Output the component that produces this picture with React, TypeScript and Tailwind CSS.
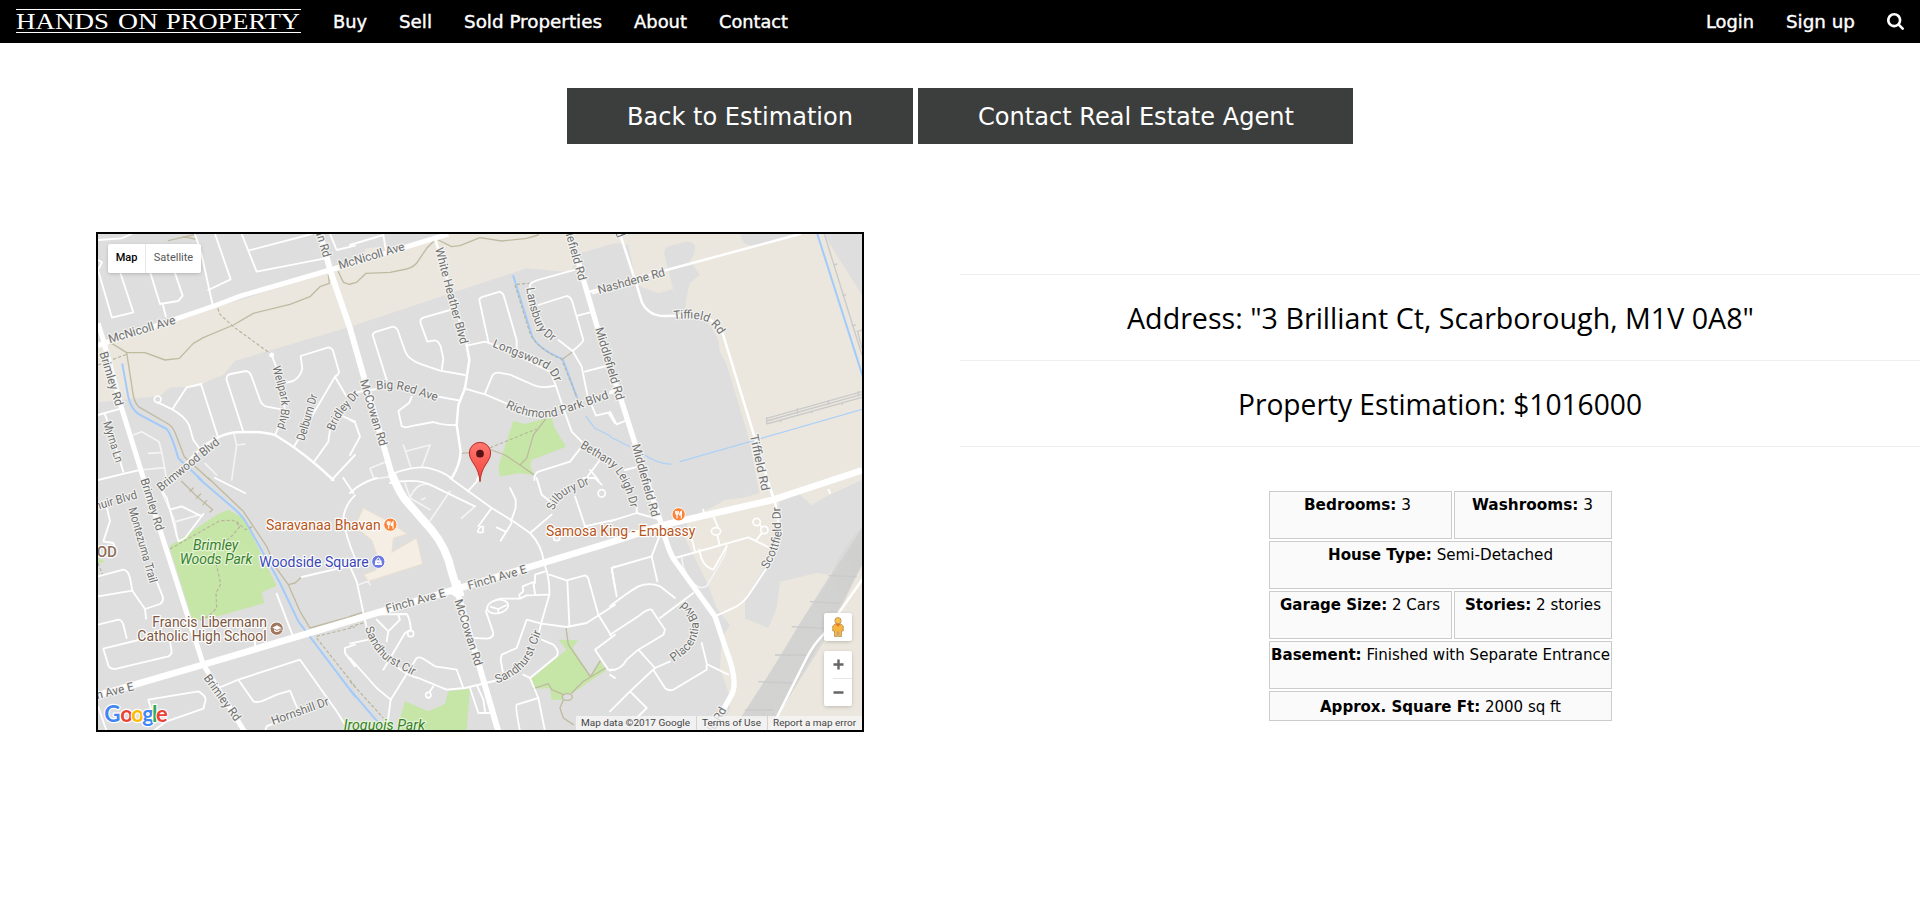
import React from "react";

type Tile = { x: number; y: number; d: string[] };

// Map geometry is drawn in a 2292 x 1488 space, split in six sheets.
const A = { x: 0, y: 0 };
const B = { x: 780, y: 0 };
const C = { x: 1560, y: 0 };
const D = { x: 0, y: 759 };
const E = { x: 780, y: 759 };
const F = { x: 1560, y: 759 };

const minorRoads: Tile[] = [
  {
    ...A,
    d: [
      "M24 105 L36 112 L24 135 L66 278 L130 262 L80 110 M180 140 L210 237 L265 228 L278 212 L240 100",
      "M315 27 L335 90 L368 240 M375 27 L422 163 L355 195 M24 45 L95 40 L125 27 M455 27 L500 140 L705 100 M475 77 L665 27 M720 27 L740 75 L795 62",
      "M228 275 L218 237 M545 390 L575 470 L585 560 L555 630 M580 475 L610 468 Q632 455 637 430 L632 393 L715 367 Q727 369 730 380 L747 440 Q747 448 735 455 L612 665",
      "M735 455 L770 515 M460 620 L410 465 Q408 450 422 447 L468 438 Q480 440 485 455 L510 525 Q515 540 530 545 L575 553",
      "M385 640 L333 477 L290 487 L247 553 M205 533 L247 553 Q285 575 297 600 L310 645 L330 672",
      "M795 690 L725 765 M670 713 L715 650 L722 600 M750 570 L795 590",
      "M24 570 L60 560 L95 550 M45 568 L60 610 L100 740 M24 765 L105 745 L150 735",
    ],
  },
  {
    ...B,
    d: [
      "M110 465 L68 330 Q70 322 80 320 L128 305 Q140 307 144 318 L165 378 Q175 405 215 418 L270 437 L345 450",
      "M300 255 L220 278 Q208 282 212 295 L232 350 L255 346 Q265 346 272 365 L280 400 L275 435",
      "M350 362 L405 350 L440 362 L600 440 L615 475 L640 550 L665 620 L700 655 L795 720",
      "M415 350 L388 225 Q388 218 400 215 L450 200 L460 208 L500 345 L500 378 M342 490 L405 508 L480 540",
      "M405 505 L428 450 Q434 442 445 443 L480 449 L550 480 Q575 492 615 482",
      "M185 515 L178 533 L145 558 L155 603 Q165 610 180 604 L250 591 Q280 602 320 600 M110 465 L80 492 L0 505 M255 513 L330 527",
      "M540 200 L540 178 Q550 168 570 163 L690 130 M565 240 L650 213 Q662 215 667 230 L700 345 Q700 352 668 378 L625 345",
      "M668 378 L695 425 L712 510 L738 572 L775 563 L795 595 M683 272 L720 262 M705 440 L780 420 M728 205 L765 195 M780 500 L795 495",
      "M695 665 L660 710 L565 740 Q553 745 553 765 M750 705 L705 765 M720 735 L745 765",
      "M130 745 Q200 720 240 730 Q280 740 305 760 M0 585 L15 592 L30 635 L0 690 M0 60 L100 30 L107 72",
      "M385 755 L380 765",
    ],
  },
  { ...C, d: ["M0 560 L20 598 L45 588 M0 505 L25 498 M45 735 L85 725"] },
  {
    ...D,
    d: [
      "M50 85 L60 130 L40 190 L70 195 L80 220 M24 295 L100 275 Q115 278 120 300 L127 338 L165 393 L168 422",
      "M165 393 L210 378 Q222 370 218 355 L200 310 M24 355 L127 338 M24 440 L85 425 Q95 425 100 440 L110 480 M40 512 L170 480 M40 512 L55 562 Q60 575 80 572 L235 535 Q245 530 245 520 L238 480",
      "M205 20 L230 60 L240 95 L265 190 L285 180 L340 108 M240 95 L275 85 L335 115 M375 0 L465 45",
      "M385 630 L445 605 L630 545 L740 700 L765 740 M445 605 L490 670 Q500 675 520 668 L560 650 L600 638 L628 705",
      "M175 665 L325 640 Q345 650 347 665 L340 692 L230 730 L190 759 M175 665 L185 700 M525 759 L530 745 L600 715",
      "M560 347 L607 470 M495 480 L495 505 M635 297 L795 260 M760 0 L790 45 M795 52 Q765 80 760 120 Q765 170 795 240",
      "M795 500 L765 510 L765 525 L795 565 M24 685 L50 759",
    ],
  },
  {
    ...E,
    d: [
      "M0 45 Q30 15 80 0 M120 15 Q200 0 240 20 L375 85 M300 0 L425 90 L490 130 L540 165 Q575 200 582 255 Q600 300 598 350 L578 420 L565 470",
      "M390 0 L353 40 M480 30 L497 65 L497 90 L483 130 M425 90 L385 145 M385 160 L400 150 M485 135 L452 188 M440 148 L465 160",
      "M560 0 L575 50 L600 70 M540 165 L605 110 M675 55 L705 145 L795 125 M700 0 L735 0 L755 20",
      "M0 265 L20 310 L50 450 L75 500 Q150 590 205 600 L290 635 L345 630 L470 600 M0 497 L55 485 M0 540 L80 630 L122 665",
      "M122 665 L110 755 M122 665 L200 540 Q210 535 220 542 L255 565 L320 575 L340 630 M235 660 L240 640 L250 625",
      "M55 410 L170 408 Q178 415 183 455 L165 465 L100 575 M90 435 L115 460 L110 490 M115 460 L150 425 L145 412 M80 425 L90 435",
      "M375 480 L410 482 Q430 480 430 465 L408 400 Q415 370 450 362 L510 362 L530 352 L598 350 M510 362 L508 350 L520 340 L518 325 L550 312 L555 348 M555 315 L555 290 L585 280",
      "M598 290 L650 307 L705 292 Q715 295 717 310 L745 410 L785 475 M652 307 L658 440 M795 380 L710 435 L650 447 L575 437 L530 425 L500 510 L455 530 L452 545 L460 590",
      "M520 590 L540 600 L565 660 L585 759 M565 660 L500 680 Q495 685 510 759 M540 600 L620 535 Q630 520 610 500 L575 485",
      "M795 470 L735 515 L775 575 L795 575 M795 600 L780 590 M360 630 L385 705 L420 705 M382 625 L400 665 L405 700",
      "M785 270 L795 330 M795 265 L785 270",
    ],
  },
  {
    ...F,
    d: [
      "M0 130 L80 105 L150 125 M80 85 L80 105 M280 95 L283 115 M655 35 L660 45 M125 235 L150 170",
      "M20 355 L5 270 L125 235 L142 310 M0 385 Q50 345 85 325 Q120 312 150 325 L195 360 M250 345 L150 420",
      "M0 470 L85 415 Q115 390 125 395 L165 455 L160 470 L85 515 L135 570 L180 550 M0 578 Q35 575 50 545 L85 515",
      "M135 570 L60 640 L0 700 M60 640 L110 690 L60 740 M130 575 L165 630 Q175 640 190 635 L290 575 L290 555 L275 495 M290 558 L355 590",
      "M195 240 L415 178 L480 210 M245 180 L255 220 M268 215 Q275 265 310 275 L350 205 M310 115 L325 150 M322 170 L328 198 M440 185 L460 160",
      "M315 415 L380 385 Q405 370 420 345 L470 270",
    ],
  },
];

const faintRoads: Tile[] = [
  {
    ...A,
    d: ["M130 630 L155 620 L207 650 L215 680 L230 765 M175 685 L212 683 M150 735 L225 728", "M432 628 L440 660 L425 765 M440 660 L465 657 M345 715 L380 750"],
  },
  { ...B, d: ["M160 660 L182 725 M170 678 L240 660 L215 728 M60 730 L108 710 L122 760 M60 730 L72 762 L120 755"] },
  {
    ...E,
    d: ["M165 15 L180 60 L240 95 M180 60 Q200 10 240 20 M300 40 L240 128 M375 85 L335 120 M215 65 L225 60", "M25 320 L55 310 L60 320"],
  },
  { ...F, d: ["M350 200 L345 230 L290 325 Q270 335 255 320 Q220 290 215 240"] },
  { ...D, d: ["M205 20 L255 130 L260 175 M260 130 L330 110"] },
];

const collectors: Tile[] = [
  { ...A, d: ["M330 672 Q390 625 440 622 Q510 618 555 630 Q640 680 730 765", "M240 765 L330 672"] },
  { ...B, d: ["M255 40 L350 360 L358 405 L345 490 L325 540 L320 600 L332 680 Q330 720 305 760"] },
  { ...C, d: ["M30 27 L80 180 L95 230 Q115 273 165 273 L270 270 Q310 280 338 325 L435 640 L490 820", "M-60 200 L170 135 L570 27"] },
  { ...F, d: ["M480 30 L495 70 L508 150 Q505 220 470 270", "M760 300 L640 470 Q610 500 590 540 L480 759"] },
];

const trails: Tile[] = [
  {
    ...A,
    d: [
      "M40 360 L65 355 L110 383 L165 383 L225 405 L268 400 L310 355 L340 338 L430 300 L490 265 L600 238 L660 215 L690 185 L718 175 L715 150 M745 140 L760 172 L780 179",
      "M110 383 L128 500 Q132 530 145 545 L235 597 Q250 605 260 635 L283 695 L360 765 M235 47 L320 27 M280 35 L315 42",
    ],
  },
  {
    ...B,
    d: [
      "M0 177 L20 172 L48 145 L120 142 L170 132 Q195 125 203 110 L230 70 L255 45 M265 45 L305 65 L330 62 L390 38 L455 48 L530 40 L565 30",
      "M425 675 L465 690 L510 720 L550 748 M510 720 L530 700 L550 630 L590 578 M332 685 L360 683 M638 402 L668 380",
    ],
  },
  {
    ...D,
    d: [
      "M355 0 L460 100 L490 145 L530 205 L555 265 L595 320 L630 400 L660 450 L795 412 M595 320 L615 315 L635 297",
      "M275 10 L320 55 L368 95 L360 102 M300 40 L310 30 M320 60 L332 48 M340 80 L350 68",
    ],
  },
  {
    ...E,
    d: ["M0 415 L42 402 M648 450 L655 500 L722 597 L767 570 M722 597 L700 610 L665 645 M722 595 L750 550 M550 632 L595 617 L605 635 L640 650 M640 665 L630 690 L640 720 L670 740"],
  },
];

const dashedTrails: Tile[] = [
  { ...A, d: ["M383 250 L390 268 L430 305 L540 385", "M24 420 L110 388"] },
  { ...B, d: ["M420 668 L560 612", "M500 178 L540 175", "M495 180 L540 325 Q560 370 635 403 L690 540"] },
  { ...D, d: ["M240 213 L390 128 L430 127 L450 145 L420 180 L385 200", "M440 130 L465 155 L490 145", "M375 240 L392 318 L378 345 L380 390 L355 415 L325 428", "M680 480 L795 625", "M680 475 L795 447", "M24 255 L38 290"] },
  { ...E, d: ["M0 610 L100 720", "M0 447 L45 433"] },
];

const water: Tile[] = [
  { ...A, d: ["M97 418 L112 500 Q120 560 160 575 L230 612 Q245 630 265 700 L335 765"] },
  { ...B, d: ["M490 153 L545 330 Q560 370 638 402 L680 515"] },
  { ...C, d: ["M622 27 L760 460"] },
  { ...D, d: ["M325 0 L430 90 Q460 115 475 145 L570 315 L625 430 L795 655"] },
  { ...E, d: ["M0 635 L90 740"] },
];

const thinWater: Tile[] = [
  { ...B, d: ["M690 525 L700 550 M708 575 L735 610 L780 632"] },
  { ...C, d: ["M0 635 L60 665 M100 688 Q150 720 185 717 M210 710 L760 552"] },
];

function Lines({ tiles, stroke, width, dash }: { tiles: Tile[]; stroke: string; width: number; dash?: string }) {
  return (
    <g fill="none" stroke={stroke} strokeWidth={width} strokeLinejoin="round" strokeLinecap={dash ? "butt" : "round"} strokeDasharray={dash}>
      {tiles.map((t, i) => (
        <g key={i} transform={`translate(${t.x} ${t.y})`}>
          {t.d.map((d, j) => (
            <path key={j} d={d} />
          ))}
        </g>
      ))}
    </g>
  );
}

type Straight = [string, number, number, number, number];

// text, start of baseline, end of baseline
const roadLabels: Straight[] = [
  ["McNicoll Ave", 62, 356, 262, 296],
  ["McNicoll Ave", 752, 134, 949, 76],
  ["Brimley Rd", 31, 385, 80, 546],
  ["Myrna Ln", 42, 594, 80, 716],
  ["Delburn Dr", 646, 650, 686, 512],
  ["Brimwood Blvd", 216, 801, 394, 656],
  ["McCowan Rd", 812, 468, 872, 666],
  ["White Heather Blvd", 1038, 72, 1114, 360],
  ["Middlefield Rd", 1518, 312, 1583, 528],
  ["Nashdene Rd", 1530, 208, 1730, 153],
  ["Tiffield Rd", 1982, 632, 2018, 800],
  ["Middlefield Rd", 1628, 662, 1688, 878],
  ["Brimley Rd", 154, 765, 202, 920],
  ["Montezuma Trail", 118, 852, 182, 1076],
  ["Brimley Rd", 343, 1360, 438, 1492],
  ["Hornshill Dr", 552, 1501, 722, 1440],
  ["McCowan Rd", 1096, 1128, 1158, 1326],
];

function RoadLabels() {
  return (
    <>
      {roadLabels.map(([t, x1, y1, x2, y2], i) => {
        const len = Math.hypot(x2 - x1, y2 - y1);
        const angle = (Math.atan2(y2 - y1, x2 - x1) * 180) / Math.PI;
        return (
          <text key={i} transform={`translate(${x1} ${y1}) rotate(${angle})`} textLength={len} lengthAdjust="spacingAndGlyphs">
            {t}
          </text>
        );
      })}
    </>
  );
}

type Curve = { id: string; text: string; d: string; len: number };

const curvedLabels: Curve[] = [
  { id: "muir", text: "muir Blvd", d: "M10 860 L152 819", len: 142 },
  { id: "wellpark", text: "Wellpark Blvd", d: "M550 428 L575 520 Q582 560 562 612", len: 186 },
  { id: "bridley", text: "Bridley Dr", d: "M735 620 Q752 575 775 552 L812 510", len: 136 },
  { id: "bigred", text: "Big Red Ave", d: "M862 495 Q920 488 960 503 L1044 530", len: 186 },
  { id: "longsword", text: "Longsword Dr", d: "M1209 366 Q1300 402 1350 422 Q1388 436 1400 480", len: 224 },
  { id: "bethany", text: "Bethany Leigh Dr", d: "M1472 668 L1562 722 Q1608 765 1625 852", len: 250 },
  { id: "lansbury", text: "Lansbury Dr", d: "M1312 190 Q1322 270 1352 320 Q1370 340 1408 362", len: 186 },
  { id: "richmond", text: "Richmond Park Blvd", d: "M1249 548 Q1330 590 1400 574 Q1480 550 1580 513", len: 326 },
  { id: "tiffieldTop", text: "Tiffield Rd", d: "M1754 284 Q1820 278 1850 290 Q1880 305 1900 350", len: 155 },
  { id: "silbury", text: "Silbury Dr", d: "M1396 858 Q1400 830 1440 805 L1510 775", len: 138 },
  { id: "scottfield", text: "Scottfield Dr", d: "M2036 1035 Q2068 980 2077 930 L2074 840", len: 196 },
  { id: "placentia", text: "Placentia Blvd", d: "M1754 1312 L1798 1278 Q1832 1240 1828 1190 Q1818 1145 1752 1104", len: 226 },
  { id: "sandhurstW", text: "Sandhurst Cir", d: "M828 1210 Q850 1280 900 1315 L980 1356", len: 212 },
  { id: "sandhurstE", text: "Sandhurst Cir", d: "M1223 1376 Q1300 1350 1330 1290 L1360 1214", len: 214 },
  { id: "finchW", text: "Finch Ave E", d: "M894 1165 L1072 1115", len: 185 },
  { id: "finchE", text: "Finch Ave E", d: "M1140 1095 L1316 1044", len: 183 },
  { id: "finchFar", text: "Finch Ave E", d: "M-40 1440 L138 1396", len: 182 },
  { id: "middlefieldTop", text: "Middlefield Rd", d: "M1408 -48 L1472 178", len: 226 },
  { id: "mccowanTop", text: "McCowan Rd", d: "M646 -90 L704 104", len: 198 },
  { id: "tiffieldFar", text: "Rd", d: "M1572 5 L1588 50", len: 38 },
  { id: "fieldSouth", text: "Middlefield Rd", d: "M1802 1650 L1916 1452", len: 224 },
];

function Curves() {
  return (
    <>
      {curvedLabels.map((c) => (
        <g key={c.id}>
          <path id={c.id} d={c.d} fill="none" stroke="none" />
          <text textLength={c.len} lengthAdjust="spacingAndGlyphs">
            <textPath href={`#${c.id}`} textLength={c.len} lengthAdjust="spacingAndGlyphs">
              {c.text}
            </textPath>
          </text>
        </g>
      ))}
    </>
  );
}

function Poi({ text, x, y, w, fill }: { text: string; x: number; y: number; w: number; fill: string }) {
  return (
    <text x={x} y={y} textLength={w} lengthAdjust="spacingAndGlyphs" fill={fill}>
      {text}
    </text>
  );
}

function Fork({ x, y }: { x: number; y: number }) {
  return (
    <g transform={`translate(${x} ${y})`}>
      <circle r="20" fill="#fb8438" stroke="#fff" strokeWidth="3" />
      <g stroke="#fff" fill="none" strokeWidth="3.500" strokeLinecap="round">
        <path d="M-9 -9 V-3 Q-9 0 -5 1 Q-1 0 -1 -3 V-9 M-5 -9 V11" />
        <path d="M8 11 V-9 Q3 -6 3 2 H8" fill="#fff" />
      </g>
    </g>
  );
}

function MapCanvas() {
  const rails = Array.from({ length: 22 }, (_, i) => i);
  return (
    <svg className="block h-full w-full" viewBox="24 27 2292 1488">
      <rect x="24" y="27" width="2292" height="1488" fill="#dedede" />
      <g fill="#ebe7de">
        <path d="M24 350 L370 250 L720 140 L1040 40 L1080 27 L2316 27 V1515 H1890 L1920 1450 L1915 1400 L1890 1330 L1895 1240 L1920 1200 L1880 1150 L1855 1080 L1830 1030 L1805 980 L1785 940 L1795 880 L1870 845 L1905 824 L1960 818 L2008 805 L2000 765 L1980 650 L1910 420 L1890 380 L1885 345 L1860 300 L1785 250 L1798 175 L1830 150 L1800 108 Q1820 80 1814 60 Q1805 47 1780 52 L1730 66 Q1718 75 1726 100 L1750 192 L1705 205 L1640 180 L1615 60 L1575 55 L1470 85 L1440 142 L1310 130 L780 305 L435 408 L400 450 L360 465 L320 487 L240 487 L210 513 L24 532 Z" />
        <path d="M808 100 L830 70 L870 65 L880 75 Z" />
      </g>
      <g fill="#dedede">
        <path d="M2200 27 L2316 210 V27 Z M1950 27 Q1955 60 1990 63 L2110 27 Z" />
        <path d="M2068 832 L2125 804 L2165 841 L2200 819 L2316 764 V910 L2215 1049 L2180 1044 L2070 1070 L2060 1150 L2035 1209 L1965 1180 L1965 1124 L2015 1040 L2050 970 Z" />
      </g>
      <g fill="#c6e6a8">
        <path d="M1270 587 L1305 597 L1385 575 L1392 605 L1428 665 L1325 705 L1320 720 L1332 750 L1290 745 L1230 755 L1225 725 Z" />
        <path d="M415 854 L460 879 L500 959 L560 1082 L515 1102 L523 1134 L385 1174 L308 1189 L238 964 L380 869 Z M24 1000 L45 1009 L24 1018 Z" />
        <path d="M945 1429 L1015 1459 L1065 1437 L1075 1399 L1140 1391 L1130 1515 H920 Z" />
        <path d="M1405 1244 L1465 1246 L1447 1269 L1502 1354 L1530 1304 L1547 1337 L1470 1389 L1420 1424 L1385 1424 L1380 1390 L1335 1391 L1320 1364 L1430 1274 Z" />
      </g>
      <path d="M820 849 L895 889 L952 927 L910 939 L906 982 L980 939 L998 1017 L835 1069 L822 1049 L858 1035 L865 1000 L845 945 L795 905 Z" fill="#f4eee5" stroke="#ebe0d0" strokeWidth="3" />
      <path d="M2316 905 Q2270 950 2220 1050 L2120 1210 L2050 1330 L1950 1480 H2055 L2140 1340 L2210 1220 L2316 1020 Z" fill="#d9d9d8" />
      <g stroke="#cacaca" strokeWidth="2" fill="none">
        {rails.map((i) => (
          <path key={i} d={`M2316 ${912 + i * 5} Q${2240 + i * 1.6} ${1030 + i * 3.2} ${2165 + i * 2.8} ${1145 + i * 3.2} L${1955 + i * 4.8} 1480`} />
        ))}
        <path d="M1965 1455 H2050 M2005 1370 L2110 1374 M2055 1290 L2150 1290 M2105 1205 L2200 1210 M2160 1130 L2250 1135 M2215 1052 L2300 1055" strokeWidth="4" />
        <path d="M2203 27 L2316 390 M2230 120 l12 -3 M2257 212 l12 -3 M2285 303 l12 -3 M2300 320 l16 -5 M2303 320 l13 50" strokeWidth="4" />
        <path d="M2030 580 L2316 500 M2030 588 L2316 508 M2030 597 L2316 517 M2030 577 v20 M2122 550 v16 M2215 525 v16 M2305 498 v16 M2072 585 v7 M2165 558 v7 M2257 533 v7" strokeWidth="4" />
      </g>
      <Lines tiles={water} stroke="#a3cbfa" width={6} />
      <Lines tiles={thinWater} stroke="#acd0f8" width={3.5} />
      <Lines tiles={trails} stroke="#bfbaa0" width={4} />
      <Lines tiles={dashedTrails} stroke="#b9b49c" width={3.5} dash="10 6" />
      <Lines tiles={faintRoads} stroke="#f4f4f4" width={5} />
      <Lines tiles={minorRoads} stroke="#fff" width={5.5} />
      <g fill="#dedede" stroke="#fff" strokeWidth="5">
        <circle cx="203" cy="523" r="10" />
        <circle cx="545" cy="390" r="5" fill="#fff" />
        <path d="M1163 920 Q1170 900 1180 905 L1178 915 Q1185 922 1170 923 Z" />
        <circle cx="962" cy="1226" r="9" />
        <circle cx="1015" cy="1410" r="8" />
        <circle cx="1535" cy="805" r="11" />
        <circle cx="1400" cy="938" r="9" />
        <ellipse cx="1223" cy="1145" rx="32" ry="20" transform="rotate(-12 1223 1145)" />
        <path d="M1200 1145 L1225 1152 L1250 1140 M1225 1152 V1165" fill="none" />
        <g fill="#ebe7de">
          <ellipse cx="1878" cy="919" rx="14" ry="11" />
          <circle cx="2000" cy="891" r="11" />
          <circle cx="2023" cy="915" r="11" />
          <path d="M2010 899 L2014 906" />
        </g>
      </g>
      <ellipse cx="1432" cy="1416" rx="15" ry="10" fill="#dedede" stroke="#bfbaa0" strokeWidth="4" />
      <Lines tiles={collectors} stroke="#fff" width={7.5} />
      <g fill="none" stroke="#fff" strokeLinejoin="round">
        <path d="M24 362 L380 240 L455 212 L720 135 L1040 38 L1075 27" strokeWidth="15" />
        <path d="M24 295 L40 345 L95 550 L160 759 L340 1319 L470 1530" strokeWidth="15" />
        <path d="M1440 27 L1520 300 L1595 530 L1670 765 L1715 900 Q1735 980 1755 1008 L1875 1174 L1910 1279 Q1945 1370 1925 1409 L1885 1480" strokeWidth="16" />
        <path d="M24 1411 L340 1319 L1100 1092 L1560 953 L1720 900 L2050 824 L2316 736" strokeWidth="20" />
        <path d="M690 27 L725 150 L780 310 L910 765" strokeWidth="18" />
        <path d="M905 745 Q930 810 955 835 L1025 915 Q1070 970 1085 1040 L1105 1105" strokeWidth="24" />
        <path d="M1090 1060 L1180 1365 L1228 1530" strokeWidth="18" />
        <path d="M1075 1098 L1108 1068 L1120 1110 L1095 1112 Z" fill="#fff" strokeWidth="6" />
      </g>
      <g transform="translate(-3 -1)" fill="#6f6f6f" stroke="#f3f3f1" strokeWidth="7" strokeLinejoin="round" paintOrder="stroke" fontFamily="Roboto, sans-serif" fontSize="36">
        <RoadLabels />
        <Curves />
      </g>
      <g stroke="#fff" strokeWidth="7" strokeLinejoin="round" paintOrder="stroke" fontFamily="Roboto, sans-serif" fontSize="42">
        <g fontWeight="500">
          <Poi text="OD" x={20} y={996} w={61} fill="#8d6f5b" />
        </g>
        <g fontStyle="italic" stroke="#e6f4d8">
          <Poi text="Brimley" x={309} y={975} w={136} fill="#37802b" />
          <Poi text="Woods Park" x={269} y={1017} w={218} fill="#37802b" />
          <Poi text="Iroquois Park" x={761} y={1515} w={244} fill="#37802b" />
        </g>
        <Poi text="Saravanaa Bhavan" x={528} y={915} w={344} fill="#b85518" />
        <Poi text="Woodside Square" x={508} y={1026} w={328} fill="#3a46b5" />
        <Poi text="Samosa King - Embassy" x={1368} y={932} w={448} fill="#b85518" />
        <Poi text="Francis Libermann" x={187} y={1206} w={344} fill="#7d573f" />
        <Poi text="Catholic High School" x={142} y={1248} w={388} fill="#7d573f" />
      </g>
      <Fork x={901} y={899} />
      <Fork x={1766} y={868} />
      <g transform="translate(865 1010)">
        <circle r="20" fill="#6b79e0" stroke="#fff" strokeWidth="3" />
        <path d="M-9 -4 H9 L11 10 H-11 Z" fill="#fff" />
        <path d="M-5 -4 Q-5 -11 0 -11 Q5 -11 5 -4" stroke="#fff" strokeWidth="3" fill="none" />
        <path d="M-4 2 Q0 6 4 2" stroke="#6b79e0" strokeWidth="2" fill="none" />
      </g>
      <g transform="translate(560 1211)">
        <circle r="20" fill="#a0785f" stroke="#fff" strokeWidth="3" />
        <path d="M-13 -3 L1 -10 L14 -3 L1 4 Z M-8 2 V7 Q0 13 9 7 V2 L1 7 Z M12 -3 V7 H14 V-3 Z" fill="#fff" />
      </g>
      <defs>
        <linearGradient id="pin" x1="0" y1="0" x2="0" y2="1">
          <stop offset="0" stopColor="#ff776f" />
          <stop offset="1" stopColor="#f1433d" />
        </linearGradient>
      </defs>
      <path d="M1170 770 C1167 742 1160 729 1147 710 Q1138 696 1138 684 A32 32 0 0 1 1202 684 Q1202 696 1193 710 C1180 729 1173 742 1170 770 Z" fill="url(#pin)" stroke="#b62f27" strokeWidth="3" />
      <circle cx="1170" cy="686" r="11.5" fill="#561314" />
      <text x="43" y="1492" fontFamily="Lato, sans-serif" fontWeight="700" fontSize="66" stroke="#fff" strokeWidth="7" paintOrder="stroke" strokeLinejoin="round">
        <tspan fill="#4285f4" x="43" textLength="49" lengthAdjust="spacingAndGlyphs">G</tspan>
        <tspan fill="#ea4335" x="91">o</tspan>
        <tspan fill="#fbbc05" x="124">o</tspan>
        <tspan fill="#4285f4" x="157">g</tspan>
        <tspan fill="#34a853" x="186">l</tspan>
        <tspan fill="#ea4335" x="198">e</tspan>
      </text>
    </svg>
  );
}

type FitProps = { w: number; h: number; size: number; children: string; family: string; y: number; heavy?: boolean };

function Fit({ w, h, size, children, family, y, heavy }: FitProps) {
  return (
    <svg width={w} height={h} className="block overflow-visible">
      <text x="0" y={y} textLength={w} lengthAdjust="spacingAndGlyphs" fontFamily={family} fontSize={size} fill="currentColor" stroke={heavy ? "currentColor" : "none"} strokeWidth="0.4">
        {children}
      </text>
    </svg>
  );
}

function PropertyMap() {
  return (
    <div className="relative h-[500px] w-[768px] overflow-hidden border-2 border-black font-[Roboto,sans-serif]">
      <MapCanvas />
      <div className="absolute top-[10px] left-[10px] flex h-[29px] w-[93px] items-center rounded-[2px] bg-white text-[11px] shadow-[0_1px_4px_-1px_rgba(0,0,0,0.3)]">
        <span className="flex h-full w-[38px] items-center justify-center border-r border-[#e8e8e8] font-medium text-black">Map</span>
        <span className="flex-1 text-center text-[#565656]">Satellite</span>
      </div>
      <div className="absolute right-[10px] bottom-[24px] flex flex-col gap-[10px]">
        <div className="flex h-7 w-7 items-center justify-center rounded-[2px] bg-white shadow-[0_1px_4px_-1px_rgba(0,0,0,0.3)]">
          <svg width="12" height="20" viewBox="0 0 12 20">
            <path d="M3 7 H9 L11.300 9 V14 H9.500 V19.500 H6.600 V15 H5.400 V19.500 H2.500 V14 H.7 V9 Z" fill="#f7b53f" stroke="#a58a5b" strokeWidth=".7" />
            <circle cx="6" cy="3.700" r="3.200" fill="#fcbf49" stroke="#a58a5b" strokeWidth=".7" />
            <path d="M3.500 6.800 H8.500 L6 10 Z" fill="#e8752d" />
          </svg>
        </div>
        <div className="flex h-[55px] w-7 flex-col items-center rounded-[2px] bg-white shadow-[0_1px_4px_-1px_rgba(0,0,0,0.3)]">
          <svg width="28" height="55" viewBox="0 0 28 55">
            <path d="M9.500 13.500 H19.500 M14.500 8.500 V18.500 M9.500 41.500 H19.500" stroke="#666" strokeWidth="2.400" fill="none" />
            <path d="M9 27.500 H28" stroke="#e6e6e6" />
          </svg>
        </div>
      </div>
      <div className="absolute right-0 bottom-0 flex h-[14px] w-[286px] items-center bg-[#f5f5f5]/80 pl-[5px] text-[#444]">
        <Fit w={109} h={14} size={9.5} y={10} family="Roboto">Map data ©2017 Google</Fit>
        <span className="ml-[6px] h-full w-px bg-[#d4d4d4]" />
        <span className="ml-[5px]"><Fit w={59} h={14} size={9.5} y={10} family="Roboto">Terms of Use</Fit></span>
        <span className="ml-[6px] h-full w-px bg-[#d4d4d4]" />
        <span className="ml-[5px]"><Fit w={83} h={14} size={9.5} y={10} family="Roboto">Report a map error</Fit></span>
      </div>
    </div>
  );
}

function Logo() {
  return (
    <svg width="285" height="43" className="mx-4 block" fill="#fff" fontFamily="Liberation Serif, serif" fontSize="23.500">
      <path d="M0 9.500 H285 M0 32.500 H285" stroke="#fff" />
      <text y="29">
        <tspan x="0" textLength="93" lengthAdjust="spacingAndGlyphs">HANDS</tspan>
        <tspan x="102" textLength="40" lengthAdjust="spacingAndGlyphs">ON</tspan>
        <tspan x="150" textLength="134" lengthAdjust="spacingAndGlyphs">PROPERTY</tspan>
      </text>
    </svg>
  );
}

const nav: [string, number][] = [["Buy", 34], ["Sell", 33], ["Sold Properties", 138], ["About", 53], ["Contact", 69]];
const verdana = "DejaVu Sans, sans-serif";

function Cell({ label, value, w, wide, short, nudge }: { label: string; value: string; w: number; wide?: boolean; short?: boolean; nudge?: boolean }) {
  return (
    <div className={`flex justify-center border border-[#ccc] bg-[#fafafa] text-black ${wide ? "col-span-2" : ""} ${short ? "h-[30px] pt-[2px]" : "h-12"} ${nudge ? "pr-[6px]" : ""}`}>
      <svg width={w} height="26" className="block overflow-visible">
        <text x="0" y="18" textLength={w} lengthAdjust="spacingAndGlyphs" fontFamily={verdana} fontSize="15">
          <tspan fontWeight="700">{label}</tspan> {value}
        </text>
      </svg>
    </div>
  );
}

export default function App() {
  return (
    <div className="min-h-[901px] bg-white font-['DejaVu_Sans',sans-serif] text-black">
      <nav className="flex h-[43px] items-center bg-black text-white">
        <Logo />
        {nav.map(([t, w]) => (
          <a key={t} className="px-4"><Fit w={w} h={43} size={18} y={28} family={verdana} heavy>{t}</Fit></a>
        ))}
        <div className="ml-auto flex items-center">
          <a className="px-4"><Fit w={48} h={43} size={18} y={28} family={verdana} heavy>Login</Fit></a>
          <a className="px-4"><Fit w={69} h={43} size={18} y={28} family={verdana} heavy>Sign up</Fit></a>
          <a className="px-4">
            <svg width="17" height="17" viewBox="0 0 1664 1664" fill="#fff">
              <path d="M1152 704q0-185-131.500-316.500t-316.500-131.500-316.500 131.500-131.500 316.500 131.500 316.500 316.500 131.500 316.500-131.500 131.500-316.500zm512 832q0 52-38 90t-90 38q-54 0-90-38l-343-342q-179 124-399 124-143 0-273.500-55.500t-225-150-150-225-55.500-273.500 55.500-273.500 150-225 225-150 273.500-55.500 273.500 55.500 225 150 150 225 55.500 273.500q0 220-124 399l343 343q37 37 37 90z" />
            </svg>
          </a>
        </div>
      </nav>
      <div className="mt-[45px] flex justify-center gap-[5px] text-white">
        <button className="flex h-14 w-[346px] items-center justify-center bg-[#3c3e3d]"><Fit w={226} h={56} size={24} y={37} family={verdana}>Back to Estimation</Fit></button>
        <button className="flex h-14 w-[435px] items-center justify-center bg-[#3c3e3d]"><Fit w={316} h={56} size={24} y={37} family={verdana}>Contact Real Estate Agent</Fit></button>
      </div>
      <main className="mt-[88px] flex">
        <section className="flex w-1/2 justify-center"><PropertyMap /></section>
        <section className="flex w-1/2 flex-col items-center pt-[42px]">
          <div className="flex h-[86px] w-full justify-center border-t border-[#eee]"><Fit w={627} h={80} size={29.5} y={54} family="Open Sans">Address: "3 Brilliant Ct, Scarborough, M1V 0A8"</Fit></div>
          <div className="flex h-[87px] w-full justify-center border-y border-[#eee]"><Fit w={404} h={80} size={29.5} y={54} family="Open Sans">Property Estimation: $1016000</Fit></div>
          <div className="mt-11 grid grid-cols-[183px_158px] gap-[2px]">
            <Cell label="Bedrooms:" value="3" w={107} nudge />
            <Cell label="Washrooms:" value="3" w={121} />
            <Cell label="House Type:" value="Semi-Detached" w={225} wide />
            <Cell label="Garage Size:" value="2 Cars" w={160} />
            <Cell label="Stories:" value="2 stories" w={136} />
            <Cell label="Basement:" value="Finished with Separate Entrance" w={339} wide />
            <Cell label="Approx. Square Ft:" value="2000 sq ft" w={241} wide short />
          </div>
        </section>
      </main>
    </div>
  );
}
